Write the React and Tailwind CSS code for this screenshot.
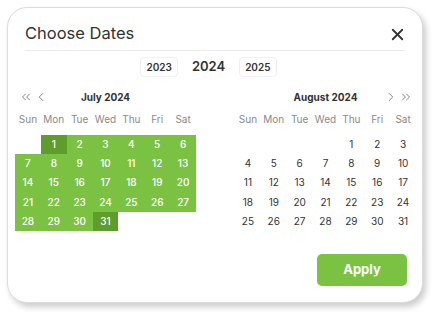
import React from 'react';
import { ChevronLeft, ChevronRight, ChevronsLeft, ChevronsRight, X } from 'lucide-react';

const WEEKDAYS = ['Sun', 'Mon', 'Tue', 'Wed', 'Thu', 'Fri', 'Sat'];

// build weeks for a month: offset = weekday of the 1st
const buildWeeks = (offset, days) => {
  const cells = [];
  for (let i = 0; i < offset; i++) cells.push(null);
  for (let d = 1; d <= days; d++) cells.push(d);
  while (cells.length % 7) cells.push(null);
  const weeks = [];
  for (let i = 0; i < cells.length; i += 7) weeks.push(cells.slice(i, i + 7));
  return weeks;
};

const Month = ({ title, weeks, selected, left }) => (
  <div className="w-[182px]">
    <div className="h-[20px] flex items-center relative">
      {left && (
        <div className="absolute left-[4px] top-[3px] flex items-center gap-[1px] text-[#777]">
          <ChevronsLeft size={14} strokeWidth={1.5} />
          <ChevronLeft size={14} strokeWidth={1.5} />
        </div>
      )}
      {!left && (
        <div className="absolute right-[3px] top-[3px] flex items-center gap-[1px] text-[#777]">
          <ChevronRight size={14} strokeWidth={1.5} />
          <ChevronsRight size={14} strokeWidth={1.5} />
        </div>
      )}
      <div className="w-full text-center text-[10px] font-bold text-[#333]">{title}</div>
    </div>
    <div className="grid grid-cols-7 mt-[6px] mb-[10px]">
      {WEEKDAYS.map((w) => (
        <div key={w} className="text-center text-[10px] text-[#8a8a8a] leading-[12px]">{w}</div>
      ))}
    </div>
    {weeks.map((week, wi) => (
      <div key={wi} className="grid grid-cols-7">
        {week.map((d, di) => {
          if (d === null) return <div key={di} className="h-[19.2px]" />;
          if (selected) {
            const edge = d === 1 || d === 31;
            return (
              <div
                key={di}
                className={`h-[19.2px] flex items-center justify-center text-[10px] font-medium text-white ${edge ? 'bg-[#5e9c2c]' : 'bg-[#7cc242]'}`}
              >
                {d}
              </div>
            );
          }
          return (
            <div key={di} className="h-[19.2px] flex items-center justify-center text-[10px] text-[#333]">
              {d}
            </div>
          );
        })}
      </div>
    ))}
  </div>
);

export default function App() {
  const july = buildWeeks(1, 31);
  const august = buildWeeks(4, 31);

  return (
    <div className="w-[438px] h-[312px] bg-white pt-[7px] pl-[7px]" style={{ fontFamily: 'Inter, "Noto Sans", sans-serif' }}>
      <div className="w-[416px] h-[296px] rounded-[20px] border border-[#dcdcdc] bg-white shadow-[3px_4px_6px_rgba(0,0,0,0.2)] px-[6px]">
        <div className="mx-[11px] h-[43px] flex items-end justify-between border-b border-[#ececec] pb-[5px]">
          <div className="text-[16.5px] leading-[24px] text-[#333]">Choose Dates</div>
          <X size={19} strokeWidth={2.3} className="text-[#333] mr-[-2px] mb-[1px]" />
        </div>
        <div className="flex items-center justify-center gap-[14px] mt-[6px] ml-[-13px]">
          <div className="px-[5px] h-[20px] flex items-center rounded-[4px] border border-[#f0f0f0] text-[10px] font-semibold text-[#333]">2023</div>
          <div className="text-[13px] font-semibold text-[#333]">2024</div>
          <div className="px-[5px] h-[20px] flex items-center rounded-[4px] border border-[#f0f0f0] text-[10px] font-semibold text-[#333]">2025</div>
        </div>
        <div className="flex gap-[39px] mt-[10px] pl-[1px]">
          <Month title="July 2024" weeks={july} selected left />
          <Month title="August 2024" weeks={august} />
        </div>
        <div className="flex justify-end mt-[23px] pr-[9px]">
          <button className="w-[90px] h-[32px] rounded-[5px] bg-[#7cc242] text-white text-[13px] font-bold">Apply</button>
        </div>
      </div>
    </div>
  );
}
